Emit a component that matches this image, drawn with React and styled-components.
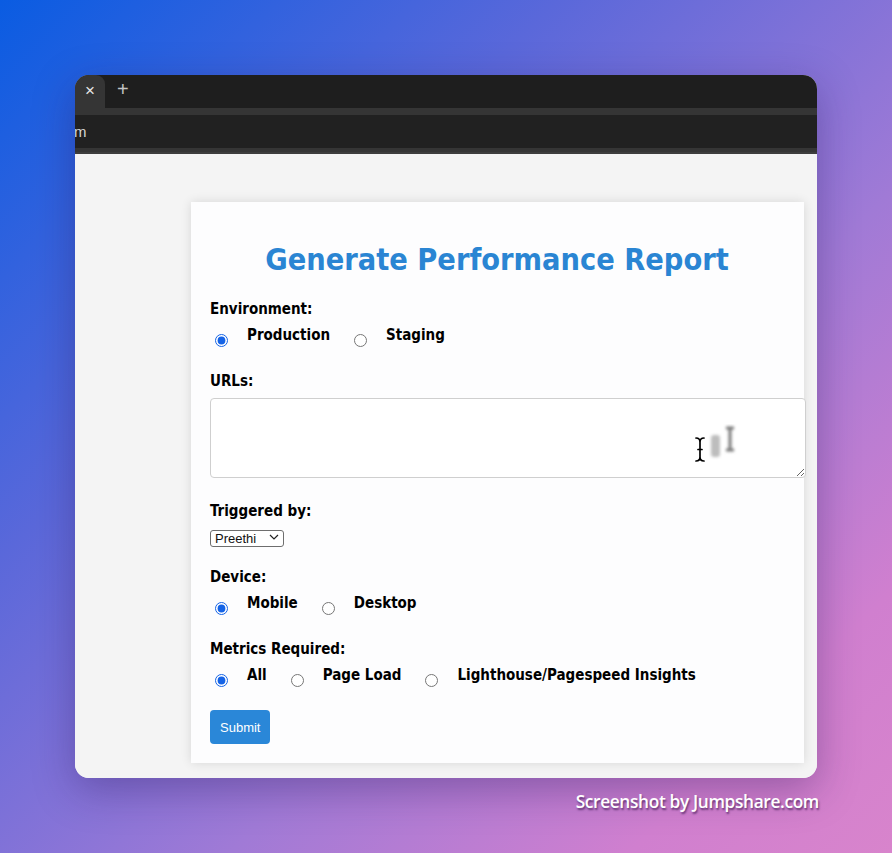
import React from "react";
import styled, { createGlobalStyle } from "styled-components";

const GlobalStyle = createGlobalStyle`
  html, body {
    margin: 0;
    padding: 0;
  }
  body {
    width: 892px;
    height: 853px;
    overflow: hidden;
    background: linear-gradient(135deg, #0a5ce2 0%, #5a68da 32%, #a07ad6 62%, #d07fcf 85%, #d884cc 100%);
    font-family: "DejaVu Sans Condensed", "DejaVu Sans", sans-serif;
  }
`;

const Stage = styled.div`
  padding: 75px 0 0 75px;
  width: 742px;
`;

const Window = styled.div`
  width: 742px;
  height: 703px;
  border-radius: 14px;
  overflow: hidden;
  display: flex;
  flex-direction: column;
  background: #f4f4f4;
  box-shadow: 0 12px 40px rgba(40, 20, 90, 0.35);
`;

const TabStrip = styled.div`
  height: 33px;
  background: #1e1e1e;
  display: flex;
  align-items: stretch;
`;

const ActiveTab = styled.div`
  width: 30px;
  background: #353535;
  border-top-right-radius: 9px;
  display: flex;
  align-items: center;
  justify-content: center;
  color: #e8e8e8;
  font-family: "Liberation Sans", sans-serif;
  font-size: 17px;
  padding-bottom: 2px;
`;

const NewTab = styled.div`
  display: flex;
  align-items: center;
  margin-left: 12px;
  color: #c4c4c4;
  font-family: "Liberation Sans", sans-serif;
  font-size: 20px;
  padding-bottom: 4px;
`;

const Toolbar = styled.div`
  background: #353535;
  padding: 7px 0 4px;
  border-bottom: 2px solid #3d3d3d;
`;

const Omnibox = styled.div`
  height: 33px;
  background: #212121;
  color: #d6d6d6;
  font-family: "Liberation Sans", sans-serif;
  font-size: 15px;
  display: flex;
  align-items: center;
  margin-left: -1px;
`;

const Content = styled.div`
  flex: 1;
  background: #f4f4f4;
  padding: 48px 0 0 116px;
`;

const Card = styled.form`
  width: 574px;
  padding: 20px 20px 19px 19px;
  background: #fdfdfe;
  box-shadow: 0 0 10px rgba(0, 0, 0, 0.12);
`;

const Title = styled.h1`
  margin: 20px 0 22px;
  text-align: center;
  color: #2a85d3;
  font-size: 30.4px;
  line-height: 36px;
  font-weight: bold;
`;

const FieldGroup = styled.div`
  margin-bottom: ${(p) => p.$gap ?? 24}px;
`;

const Label = styled.label`
  display: block;
  margin-bottom: 7px;
  font-size: 15px;
  line-height: 19px;
  font-weight: bold;
  color: #000;
`;

const RadioRow = styled.div`
  display: flex;
  align-items: flex-start;
  height: 22px;
`;

const Option = styled.label`
  display: flex;
  align-items: flex-start;
  margin-right: 19px;
  font-size: 15px;
  line-height: 19px;
  font-weight: bold;
  color: #000;
`;

const Radio = styled.input.attrs({ type: "radio" })`
  width: 13px;
  height: 13px;
  margin: 8px 19px 0 5px;
  accent-color: #1463e6;
`;

const TextareaWrap = styled.div`
  position: relative;
  width: 596px;
  height: 80px;
`;

const Textarea = styled.textarea`
  display: block;
  width: 100%;
  height: 80px;
  padding: 10px;
  border: 1px solid #cfcfcf;
  border-radius: 4px;
  background: #fff;
  box-sizing: border-box;
  resize: both;
`;

const Cursors = styled.svg`
  position: absolute;
  left: 470px;
  top: 26px;
  pointer-events: none;
`;

const SelectWrap = styled.div`
  position: relative;
  width: 74px;
  height: 17px;
  margin-top: 2px;
`;

const Select = styled.select`
  appearance: none;
  width: 74px;
  height: 17px;
  padding: 0 0 0 4px;
  border: 1px solid #6e6e6e;
  border-radius: 3px;
  background: #fff;
  font-family: "Liberation Sans", sans-serif;
  font-size: 13px;
  color: #111;
  box-sizing: border-box;
`;

const Chevron = styled.svg`
  position: absolute;
  right: 5px;
  top: 6px;
  pointer-events: none;
`;

const SubmitButton = styled.button`
  display: block;
  height: 34px;
  padding: 0 10px;
  border: none;
  border-radius: 4px;
  background: #2a87d8;
  color: #fff;
  font-family: "Liberation Sans", sans-serif;
  font-size: 13px;
`;

const Footer = styled.div`
  margin-top: 12px;
  text-align: right;
  color: #fff;
  font-family: "Open Sans", sans-serif;
  font-weight: 600;
  font-size: 17.3px;
  letter-spacing: -0.35px;
  text-shadow: 1px 2px 2px rgba(70, 30, 90, 0.75);
  margin-right: -2px;
`;

const RadioGroup = ({ name, options, checked }) => (
  <RadioRow>
    {options.map((o) => (
      <Option key={o}>
        <Radio name={name} defaultChecked={o === checked} />
        {o}
      </Option>
    ))}
  </RadioRow>
);

const App = () => {
  return (
    <Stage>
      <GlobalStyle />
      <Window>
        <TabStrip>
          <ActiveTab>×</ActiveTab>
          <NewTab>+</NewTab>
        </TabStrip>
        <Toolbar>
          <Omnibox>m</Omnibox>
        </Toolbar>
        <Content>
          <Card onSubmit={(e) => e.preventDefault()}>
            <Title>Generate Performance Report</Title>

            <FieldGroup>
              <Label>Environment:</Label>
              <RadioGroup name="env" options={["Production", "Staging"]} checked="Production" />
            </FieldGroup>

            <FieldGroup>
              <Label>URLs:</Label>
              <TextareaWrap>
                <Textarea />
                <Cursors width="60" height="44" viewBox="0 0 60 44">
                  <defs>
                    <filter id="blur" x="-50%" y="-50%" width="200%" height="200%">
                      <feGaussianBlur stdDeviation="1.6" />
                    </filter>
                  </defs>
                  <rect x="31" y="11" width="9" height="22" rx="3" fill="#bdbdbd" filter="url(#blur)" />
                  <g filter="url(#blur)" stroke="#777" strokeWidth="3" fill="none">
                    <path d="M46 4 H54 M46 26 H54 M50 4 V26" />
                  </g>
                  <g fill="none" strokeLinecap="round">
                    <path
                      d="M16 14 Q20 14 20 18 V33 Q20 37 16 37 M24 14 Q20 14 20 18 M24 37 Q20 37 20 33 M18 25.5 H22"
                      stroke="#fff"
                      strokeWidth="4"
                    />
                    <path
                      d="M16 14 Q20 14 20 18 V33 Q20 37 16 37 M24 14 Q20 14 20 18 M24 37 Q20 37 20 33 M18 25.5 H22"
                      stroke="#000"
                      strokeWidth="1.7"
                    />
                  </g>
                </Cursors>
              </TextareaWrap>
            </FieldGroup>

            <FieldGroup $gap={23}>
              <Label>Triggered by:</Label>
              <SelectWrap>
                <Select defaultValue="Preethi">
                  <option>Preethi</option>
                </Select>
                <Chevron width="10" height="6" viewBox="0 0 10 6">
                  <path d="M1 1 L5 5 L9 1" stroke="#222" strokeWidth="1.2" fill="none" />
                </Chevron>
              </SelectWrap>
            </FieldGroup>

            <FieldGroup>
              <Label>Device:</Label>
              <RadioGroup name="device" options={["Mobile", "Desktop"]} checked="Mobile" />
            </FieldGroup>

            <FieldGroup $gap={22}>
              <Label>Metrics Required:</Label>
              <RadioGroup
                name="metrics"
                options={["All", "Page Load", "Lighthouse/Pagespeed Insights"]}
                checked="All"
              />
            </FieldGroup>

            <SubmitButton type="submit">Submit</SubmitButton>
          </Card>
        </Content>
      </Window>
      <Footer>Screenshot by Jumpshare.com</Footer>
    </Stage>
  );
};

export default App;
